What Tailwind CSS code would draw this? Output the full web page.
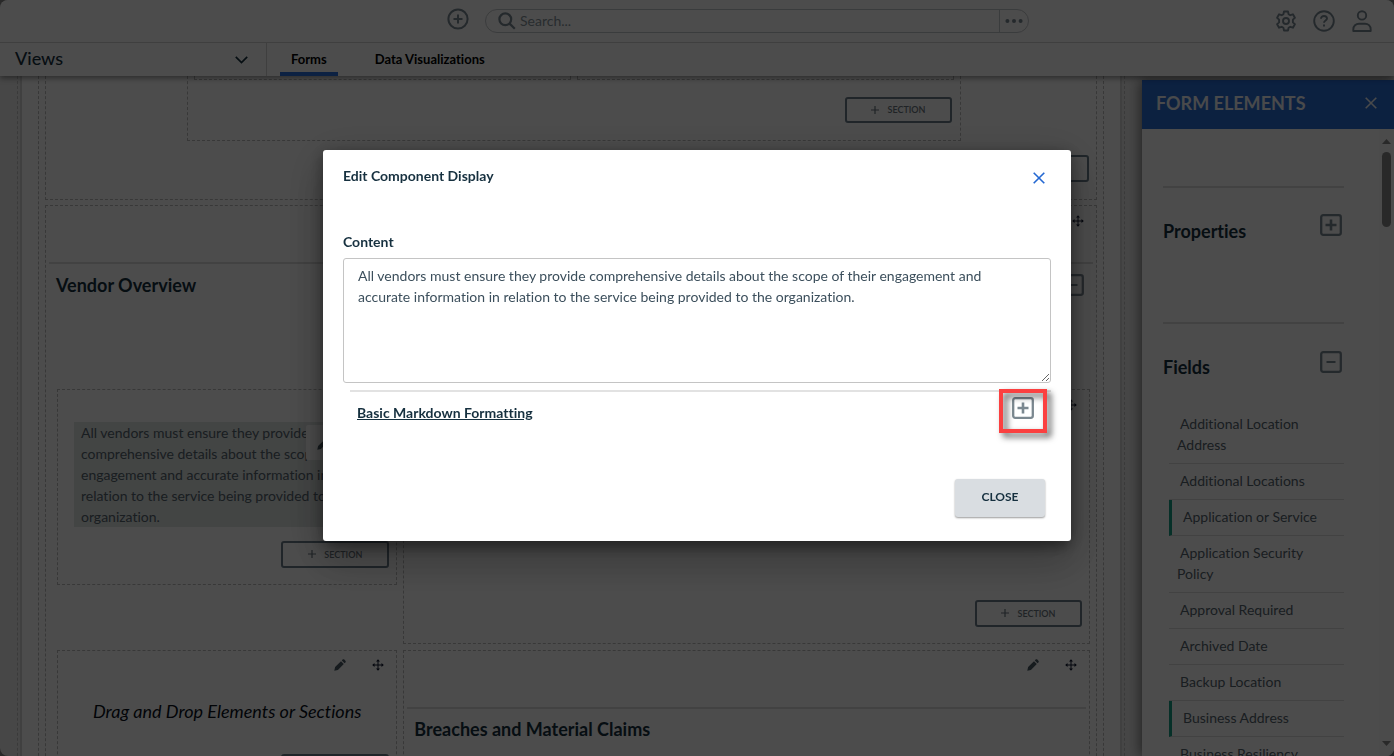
<!DOCTYPE html>
<html lang="en">

<head>
    <meta charset="UTF-8">
    <meta name="viewport" content="width=device-width, initial-scale=1.0">
    <title>Form Editor</title>
    <script src="https://cdn.jsdelivr.net/npm/@tailwindcss/browser@4"></script>
</head>

<body class="bg-[#8a8a8a] font-['Lato','Open_Sans',sans-serif] text-sm leading-[21px] text-[#16303f] [font-variant-ligatures:none]">

    <!-- Shared icons -->
    <svg class="hidden">
        <symbol id="i-plus-box" viewBox="0 0 22 22">
            <rect x="1.2" y="1.2" width="19.6" height="19.6" rx="2" fill="none" stroke="currentColor" stroke-width="2.3" />
            <path d="M11 5.5v11M5.5 11h11" fill="none" stroke="currentColor" stroke-width="2.6" />
        </symbol>
        <symbol id="i-minus-box" viewBox="0 0 22 22">
            <rect x="1.2" y="1.2" width="19.6" height="19.6" rx="2" fill="none" stroke="currentColor" stroke-width="2.3" />
            <path d="M6.5 11h9" fill="none" stroke="currentColor" stroke-width="2" />
        </symbol>
        <symbol id="i-close" viewBox="0 0 12 12">
            <path d="M.7.7l10.6 10.6M11.3.7L.7 11.3" fill="none" stroke="currentColor" stroke-width="1.6" />
        </symbol>
        <symbol id="i-pencil" viewBox="0 0 12 12">
            <path d="M.3 11.7l.8-3.6 5.9-5.9 2.8 2.8-5.9 5.9zM7.8 1.4l.8-.8c.5-.5 1.2-.5 1.7 0l1.1 1.1c.5.5.5 1.2 0 1.7l-.8.8z" fill="currentColor" />
        </symbol>
        <symbol id="i-move" viewBox="0 0 12 12">
            <path d="M6 1.5v9M1.5 6h9" fill="none" stroke="currentColor" stroke-width="1" />
            <path d="M6 .2l2 2.3H4zM6 11.8l2-2.3H4zM.2 6l2.3-2v4zM11.8 6L9.5 4v4z" fill="currentColor" />
        </symbol>
        <symbol id="i-plus" viewBox="0 0 8 8">
            <path d="M4 0v8M0 4h8" fill="none" stroke="currentColor" stroke-width="1.2" />
        </symbol>
    </svg>

    <div class="flex h-screen flex-col overflow-hidden rounded-lg bg-[#ededed]">

        <!-- Top bar -->
        <header class="relative z-10 bg-white shadow-[0_2px_6px_rgba(0,0,0,0.45)]">
            <div class="grid h-[43px] grid-cols-[1fr_auto_1fr] items-center border-b border-[#d2d2d2] pl-[120px] text-[#7b8994]">
                <button class="mr-4 -mt-1 justify-self-end" aria-label="Add">
                    <svg class="size-[22px]" viewBox="0 0 22 22" fill="none" stroke="currentColor" stroke-width="2">
                        <circle cx="11" cy="11" r="9.6" />
                        <path d="M11 6.5v9M6.5 11h9" />
                    </svg>
                </button>
                <form class="flex h-6 w-[544px] items-center rounded-full border border-[#c4c8cb] pl-3">
                    <label for="search" class="mr-1">
                        <svg class="size-[18px]" viewBox="0 0 18 18" fill="none" stroke="currentColor" stroke-width="2.2">
                            <circle cx="7.3" cy="7.3" r="5.9" />
                            <path d="M11.6 11.6l5.2 5.2" />
                        </svg>
                    </label>
                    <input id="search" type="text" placeholder="Search..." class="min-w-0 flex-1 text-sm outline-none placeholder:text-[#87939c]">
                    <button type="button" aria-label="Search options" class="flex h-full w-[29px] items-center justify-center border-l border-[#c4c8cb]">
                        <svg class="h-1 w-[18px]" viewBox="0 0 18 4" fill="currentColor">
                            <circle cx="2.4" cy="2" r="2" />
                            <circle cx="9" cy="2" r="2" />
                            <circle cx="15.6" cy="2" r="2" />
                        </svg>
                    </button>
                </form>
                <div class="mr-[21px] flex gap-4 justify-self-end">
                    <button aria-label="Settings">
                        <svg class="size-[22px]" viewBox="0 0 22 22" fill="none" stroke="currentColor" stroke-width="1.9" stroke-linejoin="round">
                            <path d="M9 1.5h4l.6 2.7 1.7 1 2.6-.9 2 3.5-2 1.8v2.8l2 1.8-2 3.5-2.6-.9-1.7 1-.6 2.7H9l-.6-2.7-1.7-1-2.6.9-2-3.5 2-1.8V9.6l-2-1.8 2-3.5 2.6.9 1.7-1z" />
                            <circle cx="11" cy="11" r="3" />
                        </svg>
                    </button>
                    <button aria-label="Help">
                        <svg class="size-[22px]" viewBox="0 0 22 22" fill="none" stroke="currentColor" stroke-width="1.9">
                            <circle cx="11" cy="11" r="9.8" />
                            <path d="M8 8.8C8 6.9 9.3 6 11 6s3 1 3 2.6c0 2-3 2-3 4.2M11 14.4v2.2" />
                        </svg>
                    </button>
                    <button aria-label="Account">
                        <svg class="size-[22px]" viewBox="0 0 22 22" fill="none" stroke="currentColor" stroke-width="1.9" stroke-linejoin="round">
                            <circle cx="11" cy="5.4" r="4.2" />
                            <path d="M2.3 21v-1.6c0-3.4 2.6-5.7 5.7-5.7h6c3.1 0 5.7 2.3 5.7 5.7V21z" />
                        </svg>
                    </button>
                </div>
            </div>
            <nav class="flex h-[33px] items-stretch">
                <button class="flex w-[267px] items-center justify-between border-r border-[#d2d2d2] pr-4 pl-[15px] text-lg leading-6 font-medium">
                    <span class="pb-1">Views</span>
                    <svg class="mr-[2px] h-2 w-[13px]" viewBox="0 0 13 8" fill="none" stroke="currentColor" stroke-width="1.7">
                        <path d="M.8.9l5.7 5.7L12.2.9" />
                    </svg>
                </button>
                <a href="#" class="ml-[13px] border-b-4 border-[#2b6fdc] px-[11px] pt-[6px] text-[13px] font-bold text-black">Forms</a>
                <a href="#" class="ml-[26px] px-[11px] pt-[6px] text-[13px] font-bold text-black">Data Visualizations</a>
            </nav>
        </header>

        <div class="flex min-h-0 flex-1">

            <!-- Form canvas -->
            <main class="min-w-0 flex-1 overflow-hidden px-[17px]">
                <div class="border-x border-dashed border-[#c4c4c4] px-[2px]">
                    <div class="border-x-2 border-[#d8d8d8] bg-white px-4">
                        <div class="border-x border-dashed border-[#bcbcbc] px-[6px]">

                            <section class="h-[124px] border border-t-0 border-dashed border-[#bcbcbc]">
                                <div class="mr-[135px] ml-[141px] h-[65px] border border-t-0 border-dashed border-[#bcbcbc] px-[6px]">
                                    <div class="grid h-[4px] grid-cols-2 gap-[6px]">
                                        <div class="border border-t-0 border-dashed border-[#bcbcbc]"></div>
                                        <div class="border border-t-0 border-dashed border-[#bcbcbc]"></div>
                                    </div>
                                    <button class="mt-[17px] mr-[2px] ml-auto flex h-[26px] w-[107px] items-center justify-center gap-2 rounded-[3px] border-2 border-[#6b7d8b] pb-px text-[9px] font-semibold text-[#6b7780]">
                                        <svg class="size-2"><use href="#i-plus" /></svg>SECTION
                                    </button>
                                </div>
                                <button class="mt-[14px] mr-[7px] ml-auto flex h-[27px] w-[107px] items-center justify-center gap-2 rounded-[3px] border-2 border-[#6b7d8b] pb-px text-[9px] font-semibold text-[#6b7780]">
                                    <svg class="size-2"><use href="#i-plus" /></svg>SECTION
                                </button>
                            </section>

                            <section class="mt-[5px] border border-dashed border-[#bcbcbc] px-[3px]">
                                <div class="flex h-[58px] justify-end gap-[26px] border-b-2 border-[#dcdcdc] pt-[9px] pr-[9px]">
                                    <button class="self-start text-[#4b5a66]" aria-label="Edit"><svg class="size-3"><use href="#i-pencil" /></svg></button>
                                    <button class="self-start text-[#101830]" aria-label="Move"><svg class="size-3"><use href="#i-move" /></svg></button>
                                </div>
                                <div class="mt-[9px] flex items-center justify-between pr-[9px] pl-[7px]">
                                    <h2 class="text-lg leading-6 font-bold">Vendor Overview</h2>
                                    <button class="text-[#7b8994]" aria-label="Collapse"><svg class="size-[22px]"><use href="#i-minus-box" /></svg></button>
                                </div>

                                <div class="mt-[92px] ml-[5px] grid grid-cols-[1fr_2fr] items-start gap-y-[6px]">
                                    <div class="mr-[3px] ml-[3px] h-[196px] border border-dashed border-[#bcbcbc] px-[7px]">
                                        <div class="relative mt-8 mr-[10px] ml-[9px] bg-[#e0e6e4] pr-2 pl-[7px] text-[#56646e]">
                                            All vendors must ensure they provide comprehensive details about the scope of their engagement and accurate information in relation to the service being provided to the organization.
                                            <span class="absolute top-[3px] right-0 flex h-[35px] w-[73px] justify-between rounded-xs bg-white px-[11px] pt-[13px]">
                                                <svg class="size-3 text-[#4b5a66]"><use href="#i-pencil" /></svg>
                                                <svg class="size-3 text-[#101830]"><use href="#i-move" /></svg>
                                            </span>
                                        </div>
                                        <button class="mt-[14px] ml-auto flex h-[27px] w-[108px] items-center justify-center gap-2 rounded-[3px] border-2 border-[#6b7d8b] pb-px text-[9px] font-semibold text-[#6b7780]">
                                            <svg class="size-2"><use href="#i-plus" /></svg>SECTION
                                        </button>
                                    </div>
                                    <div class="mr-[3px] ml-[3px] flex h-[255px] flex-col items-end justify-between border border-dashed border-[#bcbcbc] px-[7px] pt-[9px] pb-4">
                                        <span class="mr-[5px] flex gap-[26px]">
                                            <button class="text-[#4b5a66]" aria-label="Edit"><svg class="size-3"><use href="#i-pencil" /></svg></button>
                                            <button class="text-[#101830]" aria-label="Move"><svg class="size-3"><use href="#i-move" /></svg></button>
                                        </span>
                                        <button class="flex h-[27px] w-[107px] items-center justify-center gap-2 rounded-[3px] border-2 border-[#6b7d8b] pb-px text-[9px] font-semibold text-[#6b7780]">
                                            <svg class="size-2"><use href="#i-plus" /></svg>SECTION
                                        </button>
                                    </div>

                                    <div class="mr-[3px] ml-[3px] h-[160px] border border-dashed border-[#bcbcbc] px-[7px] pt-2">
                                        <div class="mr-[5px] flex justify-end gap-[26px]">
                                            <button class="text-[#4b5a66]" aria-label="Edit"><svg class="size-3"><use href="#i-pencil" /></svg></button>
                                            <button class="text-[#101830]" aria-label="Move"><svg class="size-3"><use href="#i-move" /></svg></button>
                                        </div>
                                        <p class="mt-7 text-center text-lg leading-6 text-[#08101a] italic">Drag and Drop Elements or Sections</p>
                                        <button class="mt-[31px] ml-auto flex h-[27px] w-[108px] items-center justify-center gap-2 rounded-[3px] border-2 border-[#6b7d8b] pb-px text-[9px] font-semibold text-[#6b7780]">
                                            <svg class="size-2"><use href="#i-plus" /></svg>SECTION
                                        </button>
                                    </div>
                                    <div class="mr-[3px] ml-[3px] h-[160px] border border-dashed border-[#bcbcbc] px-[3px]">
                                        <div class="flex h-[58px] justify-end gap-[26px] border-b-2 border-[#dcdcdc] pt-2 pr-[9px]">
                                            <button class="self-start text-[#4b5a66]" aria-label="Edit"><svg class="size-3"><use href="#i-pencil" /></svg></button>
                                            <button class="self-start text-[#101830]" aria-label="Move"><svg class="size-3"><use href="#i-move" /></svg></button>
                                        </div>
                                        <h2 class="mt-2 pl-[7px] text-lg leading-6 font-bold">Breaches and Material Claims</h2>
                                    </div>
                                </div>
                            </section>

                        </div>
                    </div>
                </div>
            </main>

            <!-- Form elements panel -->
            <aside class="mt-1 flex w-[252px] flex-col bg-white shadow-[-2px_0_12px_rgba(0,0,0,0.5)]">
                <div class="flex h-[49px] shrink-0 items-center justify-between bg-[#286ed8] pr-[17px] pb-1 pl-[14px] text-[#f4f7fc]">
                    <h2 class="text-lg leading-6 font-bold">FORM ELEMENTS</h2>
                    <button aria-label="Close panel"><svg class="size-3"><use href="#i-close" /></svg></button>
                </div>
                <div class="flex min-h-0 flex-1 justify-between">
                    <div class="ml-[21px] w-[181px] overflow-hidden pt-[57px]">
                        <div class="flex h-[136px] items-start justify-between border-t-2 border-[#dcdcdc] pt-[26px] pr-[2px]">
                            <h3 class="pt-[5px] text-lg leading-6 font-bold">Properties</h3>
                            <button class="text-[#7b8994]" aria-label="Expand Properties"><svg class="size-[22px]"><use href="#i-plus-box" /></svg></button>
                        </div>
                        <div class="flex h-[85px] items-start justify-between border-t-2 border-[#dcdcdc] pt-[27px] pr-[2px]">
                            <h3 class="pt-1 text-lg leading-6 font-bold">Fields</h3>
                            <button class="text-[#7b8994]" aria-label="Collapse Fields"><svg class="size-[22px]"><use href="#i-minus-box" /></svg></button>
                        </div>
                        <ul class="ml-[6px] text-[#56646e]">
                            <li class="border-b border-[#dcdcdc] pt-[6px] pb-2 pl-2 indent-[3px]">Additional Location<br>Address</li>
                            <li class="border-b border-[#dcdcdc] pt-[6px] pb-2 pl-2 indent-[3px]">Additional Locations</li>
                            <li class="border-b border-l-3 border-b-[#dcdcdc] border-l-[#16a085] pt-[6px] pb-2 pl-2 indent-[3px]">Application or Service</li>
                            <li class="border-b border-[#dcdcdc] pt-[6px] pb-2 pl-2 indent-[3px]">Application Security<br>Policy</li>
                            <li class="border-b border-[#dcdcdc] pt-[6px] pb-2 pl-2 indent-[3px]">Approval Required</li>
                            <li class="border-b border-[#dcdcdc] pt-[6px] pb-2 pl-2 indent-[3px]">Archived Date</li>
                            <li class="border-b border-[#dcdcdc] pt-[6px] pb-2 pl-2 indent-[3px]">Backup Location</li>
                            <li class="border-b border-l-3 border-b-[#dcdcdc] border-l-[#16a085] pt-[6px] pb-2 pl-2 indent-[3px]">Business Address</li>
                            <li class="border-b border-[#dcdcdc] pt-[6px] pb-2 pl-2 indent-[3px]">Business Resiliency</li>
                        </ul>
                    </div>
                    <div class="flex w-[15px] flex-col items-center bg-[#fafafa] pt-[10px] pb-[10px]">
                        <svg class="h-[5px] w-[9px] text-[#8b8b8b]" viewBox="0 0 9 5"><path d="M0 5l4.5-5L9 5z" fill="currentColor" /></svg>
                        <div class="mt-2 h-[75px] w-[9px] rounded-full bg-[#8b8b8b]"></div>
                        <svg class="mt-auto h-[5px] w-[9px] text-[#8b8b8b]" viewBox="0 0 9 5"><path d="M0 0l4.5 5L9 0z" fill="currentColor" /></svg>
                    </div>
                </div>
            </aside>
        </div>
    </div>

    <!-- Modal -->
    <div class="fixed inset-0 z-20 flex items-start justify-center bg-black/70 pt-[150px]">
        <div role="dialog" aria-labelledby="dialogTitle" class="w-[748px] rounded-[3px] bg-white px-5 pt-[15px] pb-6 shadow-[0_11px_15px_-7px_rgba(0,0,0,0.2),0_24px_38px_3px_rgba(0,0,0,0.14),0_9px_46px_8px_rgba(0,0,0,0.12),0_4px_16px_rgba(0,0,0,0.4)]">
            <div class="flex items-center justify-between pr-[6px]">
                <h1 id="dialogTitle" class="font-bold">Edit Component Display</h1>
                <button class="pt-1 text-[#2468d2]" aria-label="Close dialog"><svg class="size-3"><use href="#i-close" /></svg></button>
            </div>
            <label for="content" class="mt-[45px] block font-bold">Content</label>
            <textarea id="content" class="mt-[6px] block h-[125px] w-full rounded-[3px] border border-[#c4c4c4] px-[14px] py-[6px] leading-[21px] text-[#3c4f5c] outline-none">All vendors must ensure they provide comprehensive details about the scope of their engagement and
accurate information in relation to the service being provided to the organization.</textarea>
            <div class="relative mt-[7px] ml-[7px] flex items-start justify-between border-t-2 border-[#e2e2e2] pt-[5px] pr-[17px] pl-[7px]">
                <h2 class="pt-[5px] font-bold underline">Basic Markdown Formatting</h2>
                <button class="text-[#7b8890]" aria-label="Expand Basic Markdown Formatting"><svg class="size-[22px]"><use href="#i-plus-box" /></svg></button>
                <!-- highlight around the expand button -->
                <span class="pointer-events-none absolute -top-[3px] right-1 h-11 w-12 border-4 border-[#fb4040] drop-shadow-[4px_4px_3px_rgba(0,0,0,0.65)]"></span>
            </div>
            <div class="mt-14 mr-[6px] flex justify-end">
                <button class="h-[38px] w-[90px] rounded-[3px] bg-[#d9dde1] pb-[2px] text-xs font-bold shadow-[0_1px_2px_rgba(0,0,0,0.4)]">CLOSE</button>
            </div>
        </div>
    </div>

</body>

</html>
